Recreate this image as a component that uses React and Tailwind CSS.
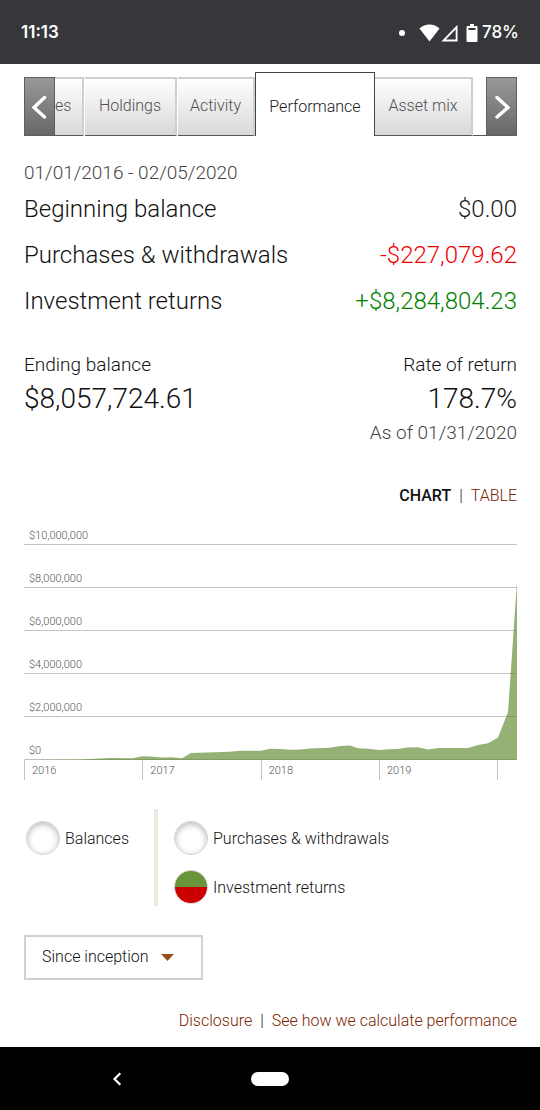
import { useState } from "react";

const summary = [
  { label: "Beginning balance", value: "$0.00", tone: "text-[#1a1a1a]" },
  { label: "Purchases & withdrawals", value: "-$227,079.62", tone: "text-[#f00000]" },
  { label: "Investment returns", value: "+$8,284,804.23", tone: "text-[#008000]" },
];

const axisLabels = ["$10,000,000", "$8,000,000", "$6,000,000", "$4,000,000", "$2,000,000", "$0"];
const years = ["2016", "2017", "2018", "2019"];

// [distance along the time axis, height above zero] on a 493 x 215 plot
const series = [
  [0, 0], [59, 0.5], [66, 1], [86, 2], [109, 1.8], [118, 3.8], [126, 3.5], [138, 2.4], [148, 2.7],
  [158, 1.7], [167, 7], [206, 8.3], [216, 9.2], [237, 9.2], [246, 11.2], [256, 11], [267, 10.2],
  [276, 10.4], [286, 11.4], [306, 12.2], [316, 14], [326, 14.6], [334, 11.8], [344, 11.2], [355, 9.9],
  [364, 10.8], [374, 11], [383, 12.4], [394, 12.8], [404, 10.4], [414, 12.1], [444, 12], [454, 15],
  [464, 16.8], [474, 22.4], [484, 48], [493, 178],
];
const areaPoints = `0,215 ${series.map(([x, y]) => `${x},${215 - y}`).join(" ")} 493,215`;

const tabBase =
  "h-[59px] border-t-2 border-r-2 border-b border-t-[#cfcfcf] border-r-[#cfcfcf] border-b-[#555] bg-linear-to-b from-white to-[#d8d8d8] pb-0.5 text-base text-[#505050]";

function StatusBar() {
  return (
    <header className="flex h-16 items-center justify-between bg-[#36373a] px-[21px] pt-0.5 font-['Inter',sans-serif] text-white">
      <time className="text-[17px] font-semibold">11:13</time>
      <div className="flex items-center">
        <span className="mr-[14px] size-[6px] rounded-full bg-white" />
        <svg className="h-[18px] w-10" viewBox="0 0 40 18" aria-hidden="true">
          <path d="M0.5 4.5C6-.7 15-.7 20.5 4.5L10.5 17.5Z" fill="#fff" />
          <path d="M37.6 3V16.5H24.5Z" fill="none" stroke="#fff" strokeWidth="1.8" />
        </svg>
        <svg className="mr-[4px] ml-[7px] h-[18px] w-[12px]" viewBox="0 0 12 18" aria-hidden="true">
          <path d="M4 0h4v2h2.5Q11.500 2 11.500 3.200V16.800Q11.500 18 10.300 18H1.700Q.5 18 .5 16.800V3.200Q.5 2 1.700 2H4Z" fill="#fff" />
          <path d="M2.500 4h7v2h-7Z" fill="#36373a" />
        </svg>
        <span className="text-[17px] font-medium">78%</span>
      </div>
    </header>
  );
}

function ScrollButton({ label, d }) {
  return (
    <button
      aria-label={label}
      className="flex h-[59px] w-[31px] shrink-0 items-center justify-center border border-[#5e5e5e] bg-linear-to-b from-[#999] to-[#686868]"
    >
      <svg className="h-6 w-4 shrink-0" viewBox="0 0 16 24" fill="none" stroke="#fff" strokeWidth="3.400" strokeLinecap="round" aria-hidden="true">
        <path d={d} />
      </svg>
    </button>
  );
}

function Tabs() {
  return (
    <nav className="flex items-end" aria-label="Account sections">
      <ScrollButton label="Previous tabs" d="M12.500 2.500 2 12.500l10.500 9.500" />
      <button className={`${tabBase} w-[29px] pr-3`}>es</button>
      <button className={`${tabBase} ml-px w-[92px]`}>Holdings</button>
      <button className={`${tabBase} ml-px w-[77px] border-r-0`}>Activity</button>
      <button
        aria-current="page"
        className="h-16 w-[120px] border-t border-r border-l border-[#444] bg-white pt-1 text-base text-[#1a1a1a]"
      >
        Performance
      </button>
      <button className={`${tabBase} w-[98px]`}>Asset mix</button>
      <span className="flex-1 border-b border-[#555]" />
      <ScrollButton label="Next tabs" d="M3 2.500 14 12.500 3 22" />
    </nav>
  );
}

function Chart() {
  return (
    <figure aria-label="Investment returns over time">
      <div className="relative text-[11px] text-[#555]">
        {axisLabels.map((label, i) => (
          <div
            key={label}
            className={`flex items-end border-b border-[#c4c4c4] pl-[5px] leading-4 ${i === 0 ? "h-9" : "h-[43px]"}`}
          >
            {label}
          </div>
        ))}
        <svg
          className="absolute bottom-0 left-0 h-[215px] w-full"
          viewBox="0 0 493 215"
          preserveAspectRatio="none"
          aria-hidden="true"
        >
          <polygon points={areaPoints} fill="#69903b" fillOpacity="0.7" />
        </svg>
      </div>
      <div className="flex h-5 text-[11px] leading-[22px] text-[#555]">
        {years.map((year) => (
          <span key={year} className="w-[24%] border-l border-[#c4c4c4] pl-[7px]">
            {year}
          </span>
        ))}
        <span className="flex-1 border-l border-[#c4c4c4]" />
      </div>
    </figure>
  );
}

function SeriesOption({ value, label, selected, onSelect }) {
  return (
    <label className="flex h-[34px] items-center gap-[5px] text-base">
      <input
        type="radio"
        name="series"
        value={value}
        checked={selected === value}
        onChange={() => onSelect(value)}
        className="size-[34px] shrink-0 appearance-none rounded-full border border-[#d4d4d4] bg-white shadow-[inset_0_2px_6px_#b8b8b8] checked:bg-[linear-gradient(#69943a_50%,#cc0000_50%)] checked:shadow-none"
      />
      <span className="pt-0.5">{label}</span>
    </label>
  );
}

function SeriesPicker() {
  const [selected, setSelected] = useState("returns");
  return (
    <fieldset className="mt-[29px] flex" aria-label="Chart series">
      <div className="w-[134px] border-r-4 border-[#e9eae0] pt-3 pl-[2px]">
        <SeriesOption value="balances" label="Balances" selected={selected} onSelect={setSelected} />
      </div>
      <div className="flex flex-col gap-[15px] pt-3 pb-[2px] pl-4">
        <SeriesOption value="purchases" label="Purchases & withdrawals" selected={selected} onSelect={setSelected} />
        <SeriesOption value="returns" label="Investment returns" selected={selected} onSelect={setSelected} />
      </div>
    </fieldset>
  );
}

function NavigationBar() {
  return (
    <footer className="grid h-[63px] grid-cols-[1fr_38px_1fr] items-center bg-black">
      <button aria-label="Back" className="ml-28 justify-self-start text-white">
        <svg className="h-[14px] w-[10px]" viewBox="0 0 10 14" fill="none" stroke="currentColor" strokeWidth="2.200" aria-hidden="true">
          <path d="M8.300 1.200 2.500 7l5.800 5.800" />
        </svg>
      </button>
      <button aria-label="Home" className="h-[14px] rounded-full bg-white" />
    </footer>
  );
}

export default function App() {
  return (
    <div className="flex min-h-screen flex-col bg-white font-['Roboto',sans-serif] font-light text-[#111]">
      <StatusBar />
      <main className="flex-1 pt-2 pr-[23px] pl-6">
        <h1 className="sr-only">Performance</h1>
        <Tabs />
        <p className="mt-6 text-[19px] leading-[26px] text-[#444]">01/01/2016 - 02/05/2020</p>
        <dl className="text-2xl leading-[46px]">
          {summary.map((row) => (
            <div key={row.label} className="flex justify-between">
              <dt>{row.label}</dt>
              <dd className={row.tone}>{row.value}</dd>
            </div>
          ))}
        </dl>
        <dl className="mt-7 flex justify-between">
          <div>
            <dt className="text-[19px] leading-[26px]">Ending balance</dt>
            <dd className="text-[28px] leading-[42px]">$8,057,724.61</dd>
          </div>
          <div className="text-right">
            <dt className="text-[19px] leading-[26px]">Rate of return</dt>
            <dd className="text-[28px] leading-[42px]">178.7%</dd>
            <dd className="text-[19px] leading-[26px] text-[#444]">As of 01/31/2020</dd>
          </div>
        </dl>
        <div className="mt-[37px] flex justify-end gap-2 text-base leading-[26px]">
          <button className="font-medium">CHART</button>
          <span>|</span>
          <button className="text-[#7a2400]">TABLE</button>
        </div>
        <Chart />
        <SeriesPicker />
        <div className="relative mt-[29px] w-[179px]">
          <select
            aria-label="Time period"
            className="h-[45px] w-full appearance-none border-2 border-[#d2d2d2] bg-white pb-[2px] pl-4 text-base"
          >
            <option>Since inception</option>
          </select>
          <svg className="pointer-events-none absolute top-[19px] right-[29px] h-[7px] w-[13px]" viewBox="0 0 13 7" aria-hidden="true">
            <path d="M0 0h13L6.500 7Z" fill="#96501e" />
          </svg>
        </div>
        <div className="mt-7 mb-[13px] flex justify-end gap-2 text-base leading-[26px]">
          <a href="#disclosure" className="text-[#7a2400]">Disclosure</a>
          <span>|</span>
          <a href="#calculation" className="text-[#7a2400]">See how we calculate performance</a>
        </div>
      </main>
      <NavigationBar />
    </div>
  );
}
